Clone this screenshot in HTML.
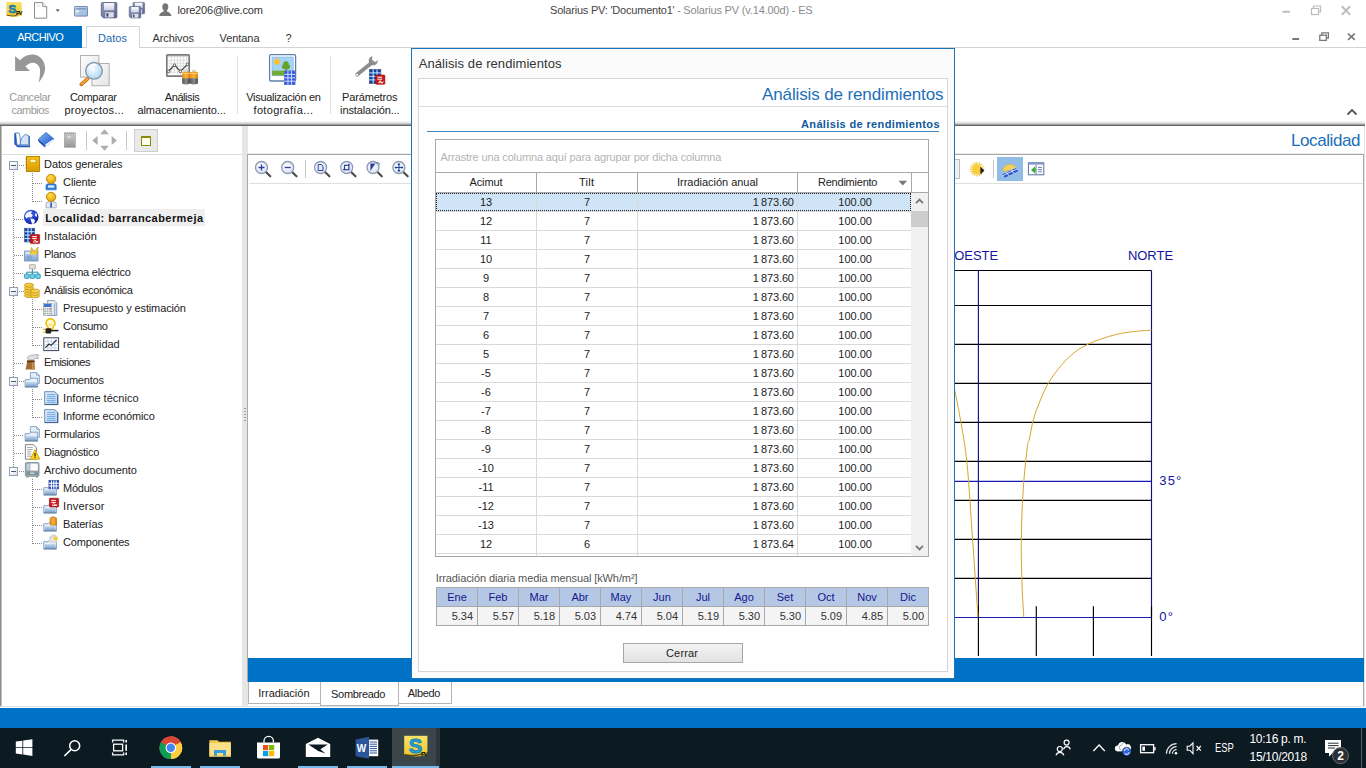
<!DOCTYPE html>
<html lang="es"><head><meta charset="utf-8"><title>Solarius PV</title><style>
html,body{margin:0;padding:0;}
body{width:1366px;height:768px;overflow:hidden;background:#fff;font-family:"Liberation Sans", sans-serif;font-size:11px;color:#222;position:relative;}
.a{position:absolute;box-sizing:content-box;}
.t{position:absolute;white-space:pre;}
svg{overflow:visible;}
</style></head>
<body>
<div class="t" style="top:0px;line-height:20px;font-size:11px;color:#333;left:177.5px;letter-spacing:-0.188px;">lore206@live.com</div>
<div class="t" style="top:0px;line-height:20px;font-size:11px;color:#444;left:550.1px;letter-spacing:-0.215px;">Solarius PV: &#x27;Documento1&#x27;</div>
<div class="t" style="top:0px;line-height:20px;font-size:11px;color:#8a8a8a;left:674.0px;letter-spacing:-0.164px;"> - Solarius PV (v.14.00d) - ES</div>
<div class="a" style="left:139px;top:47px;width:1227px;height:1px;background:#d4d4d4"></div>
<div class="a" style="left:82px;top:47px;width:5px;height:1px;background:#d4d4d4"></div>
<div class="a" style="left:0px;top:26px;width:82px;height:22px;background:#0072c6;"></div>
<div class="t" style="top:27px;line-height:20px;font-size:11px;color:#fff;left:17.3px;letter-spacing:-0.621px;">ARCHIVO</div>
<div class="a" style="left:86px;top:26px;width:54px;height:23px;background:#fff;border:1px solid #d4d4d4;border-bottom:none;width:52px;height:21px;"></div>
<div class="t" style="top:28px;line-height:20px;font-size:11px;color:#1e69ad;left:98.1px;letter-spacing:0.038px;">Datos</div>
<div class="t" style="top:28px;line-height:20px;font-size:11px;color:#333;left:152.5px;letter-spacing:-0.098px;">Archivos</div>
<div class="t" style="top:28px;line-height:20px;font-size:11px;color:#333;left:219.5px;letter-spacing:-0.062px;">Ventana</div>
<div class="t" style="top:28px;line-height:20px;font-size:11px;color:#333;left:285.5px;letter-spacing:0.000px;">?</div>
<div class="t" style="top:87px;line-height:20px;font-size:11px;color:#9a9a9a;left:9.3px;letter-spacing:-0.333px;">Cancelar</div>
<div class="t" style="top:100px;line-height:20px;font-size:11px;color:#9a9a9a;left:11.5px;letter-spacing:-0.528px;">cambios</div>
<div class="t" style="top:87px;line-height:20px;font-size:11px;color:#222;left:69.9px;letter-spacing:-0.258px;">Comparar</div>
<div class="t" style="top:100px;line-height:20px;font-size:11px;color:#222;left:64.5px;letter-spacing:0.231px;">proyectos...</div>
<div class="t" style="top:87px;line-height:20px;font-size:11px;color:#222;left:164.8px;letter-spacing:-0.429px;">Análisis</div>
<div class="t" style="top:100px;line-height:20px;font-size:11px;color:#222;left:137.5px;letter-spacing:-0.099px;">almacenamiento...</div>
<div class="t" style="top:87px;line-height:20px;font-size:11px;color:#222;left:246.3px;letter-spacing:-0.313px;">Visualización en</div>
<div class="t" style="top:100px;line-height:20px;font-size:11px;color:#222;left:253.5px;letter-spacing:0.320px;">fotografía...</div>
<div class="t" style="top:87px;line-height:20px;font-size:11px;color:#222;left:342.0px;letter-spacing:-0.151px;">Parámetros</div>
<div class="t" style="top:100px;line-height:20px;font-size:11px;color:#222;left:340.1px;letter-spacing:-0.120px;">instalación...</div>
<div class="a" style="left:237px;top:56px;width:1px;height:58px;background:#e2e2e2"></div>
<div class="a" style="left:330px;top:56px;width:1px;height:58px;background:#e2e2e2"></div>
<div class="a" style="left:0px;top:121px;width:1365px;height:3px;background:linear-gradient(#fff,#e4e4e4 50%,#c4c4c4);"></div>
<div class="a" style="left:0px;top:124px;width:1365px;height:1px;background:#9c9c9c"></div>
<div class="a" style="left:0px;top:125px;width:1365px;height:1px;background:#666"></div>
<svg class="a" style="left:1280px;top:2px;" width="76" height="16" viewBox="0 0 76 16">
      <rect x="2.4" y="8.8" width="7.4" height="2" fill="#bdbdbd"/>
      <g fill="none" stroke="#bdbdbd" stroke-width="1.2"><rect x="31.5" y="6.5" width="7" height="6"/><path d="M33.5 6.5v-2.5h7v6h-2"/></g>
      <path d="M61.8 4.3l8.4 8.4M70.2 4.3l-8.4 8.4" stroke="#bdbdbd" stroke-width="2" fill="none"/></svg>
<svg class="a" style="left:1290px;top:30px;" width="70" height="14" viewBox="0 0 70 14">
      <rect x="2.3" y="8" width="6.8" height="2" fill="#777"/>
      <g fill="none" stroke="#777" stroke-width="1.3"><rect x="29.8" y="5.2" width="6.5" height="5.2"/><path d="M31.8 5.2v-2.4h6.6v5.2h-2"/></g>
      <path d="M58 3.6l6.8 6.2M64.8 3.6l-6.8 6.2" stroke="#777" stroke-width="1.6" fill="none"/></svg>
<svg class="a" style="left:1346px;top:107px;" width="12" height="10" viewBox="0 0 12 10"><path d="M1.5 7.5l4.5-4.5 4.5 4.5" stroke="#555" stroke-width="1.8" fill="none"/></svg>
<div class="a" style="left:0px;top:126px;width:1px;height:580px;background:#8e8e8e"></div>
<div class="a" style="left:1px;top:126px;width:1px;height:580px;background:#bdbdbd"></div>
<div class="a" style="left:2px;top:154px;width:240px;height:1px;background:#dcdcdc"></div>
<div class="a" style="left:242px;top:126px;width:6px;height:581px;background:#e6e6e6;"></div>
<div class="a" style="left:244px;top:408px;width:2px;height:1px;background:#9a9a9a;"></div>
<div class="a" style="left:244px;top:411px;width:2px;height:1px;background:#9a9a9a;"></div>
<div class="a" style="left:244px;top:414px;width:2px;height:1px;background:#9a9a9a;"></div>
<div class="a" style="left:244px;top:417px;width:2px;height:1px;background:#9a9a9a;"></div>
<div class="a" style="left:244px;top:420px;width:2px;height:1px;background:#9a9a9a;"></div>
<div class="a" style="left:0px;top:706px;width:248px;height:1px;background:#e0e0e0"></div>
<div class="a" style="left:86px;top:131px;width:1px;height:19px;background:#c9c9c9"></div>
<div class="a" style="left:126px;top:131px;width:1px;height:19px;background:#c9c9c9"></div>
<div class="a" style="left:134px;top:129px;width:22px;height:21px;background:#e9e9e9;border:1px solid #cfcfcf;"></div>
<div class="a" style="left:141px;top:136px;width:8px;height:8px;background:#fffef0;border:1px solid #8c8c00;border-top-width:2px;height:7px;"></div>
<div class="a" style="left:13px;top:171px;width:1px;height:296px;background-image:repeating-linear-gradient(0deg,#8a8a8a 0 1px,transparent 1px 2px);"></div>
<div class="a" style="left:32px;top:173px;width:1px;height:29px;background-image:repeating-linear-gradient(0deg,#8a8a8a 0 1px,transparent 1px 2px);"></div>
<div class="a" style="left:32px;top:299px;width:1px;height:47px;background-image:repeating-linear-gradient(0deg,#8a8a8a 0 1px,transparent 1px 2px);"></div>
<div class="a" style="left:32px;top:389px;width:1px;height:29px;background-image:repeating-linear-gradient(0deg,#8a8a8a 0 1px,transparent 1px 2px);"></div>
<div class="a" style="left:32px;top:479px;width:1px;height:65px;background-image:repeating-linear-gradient(0deg,#8a8a8a 0 1px,transparent 1px 2px);"></div>
<div class="a" style="left:19px;top:165px;width:6px;height:1px;background-image:repeating-linear-gradient(90deg,#8a8a8a 0 1px,transparent 1px 2px);"></div>
<div class="a" style="left:9px;top:161px;width:7px;height:7px;background:#fff;border:1px solid #919fb5;background:linear-gradient(135deg,#fff 30%,#d9dde6);"></div>
<div class="a" style="left:11px;top:165px;width:5px;height:1px;background:#4a5878"></div>
<div class="t" style="top:154px;line-height:20px;font-size:11px;color:#222;left:44.1px;letter-spacing:-0.122px;">Datos generales</div>
<div class="a" style="left:33px;top:183px;width:10px;height:1px;background-image:repeating-linear-gradient(90deg,#8a8a8a 0 1px,transparent 1px 2px);"></div>
<div class="t" style="top:172px;line-height:20px;font-size:11px;color:#222;left:63.1px;letter-spacing:-0.142px;">Cliente</div>
<div class="a" style="left:33px;top:201px;width:10px;height:1px;background-image:repeating-linear-gradient(90deg,#8a8a8a 0 1px,transparent 1px 2px);"></div>
<div class="t" style="top:190px;line-height:20px;font-size:11px;color:#222;left:63.1px;letter-spacing:-0.305px;">Técnico</div>
<div class="a" style="left:14px;top:219px;width:10px;height:1px;background-image:repeating-linear-gradient(90deg,#8a8a8a 0 1px,transparent 1px 2px);"></div>
<div class="a" style="left:43px;top:209px;width:162px;height:17px;background:#efefef;"></div>
<div class="t" style="top:208px;line-height:20px;font-size:11px;color:#111;font-weight:700;left:45.3px;letter-spacing:0.439px;">Localidad: barrancabermeja</div>
<div class="a" style="left:14px;top:237px;width:10px;height:1px;background-image:repeating-linear-gradient(90deg,#8a8a8a 0 1px,transparent 1px 2px);"></div>
<div class="t" style="top:226px;line-height:20px;font-size:11px;color:#222;left:44.1px;letter-spacing:0.011px;">Instalación</div>
<div class="a" style="left:14px;top:255px;width:10px;height:1px;background-image:repeating-linear-gradient(90deg,#8a8a8a 0 1px,transparent 1px 2px);"></div>
<div class="t" style="top:244px;line-height:20px;font-size:11px;color:#222;left:44.1px;letter-spacing:-0.368px;">Planos</div>
<div class="a" style="left:14px;top:273px;width:10px;height:1px;background-image:repeating-linear-gradient(90deg,#8a8a8a 0 1px,transparent 1px 2px);"></div>
<div class="t" style="top:262px;line-height:20px;font-size:11px;color:#222;left:44.1px;letter-spacing:-0.231px;">Esquema eléctrico</div>
<div class="a" style="left:19px;top:291px;width:6px;height:1px;background-image:repeating-linear-gradient(90deg,#8a8a8a 0 1px,transparent 1px 2px);"></div>
<div class="a" style="left:9px;top:287px;width:7px;height:7px;background:#fff;border:1px solid #919fb5;background:linear-gradient(135deg,#fff 30%,#d9dde6);"></div>
<div class="a" style="left:11px;top:291px;width:5px;height:1px;background:#4a5878"></div>
<div class="t" style="top:280px;line-height:20px;font-size:11px;color:#222;left:44.1px;letter-spacing:-0.315px;">Análisis económica</div>
<div class="a" style="left:33px;top:309px;width:10px;height:1px;background-image:repeating-linear-gradient(90deg,#8a8a8a 0 1px,transparent 1px 2px);"></div>
<div class="t" style="top:298px;line-height:20px;font-size:11px;color:#222;left:63.1px;letter-spacing:-0.137px;">Presupuesto y estimación</div>
<div class="a" style="left:33px;top:327px;width:10px;height:1px;background-image:repeating-linear-gradient(90deg,#8a8a8a 0 1px,transparent 1px 2px);"></div>
<div class="t" style="top:316px;line-height:20px;font-size:11px;color:#222;left:63.1px;letter-spacing:-0.380px;">Consumo</div>
<div class="a" style="left:33px;top:345px;width:10px;height:1px;background-image:repeating-linear-gradient(90deg,#8a8a8a 0 1px,transparent 1px 2px);"></div>
<div class="t" style="top:334px;line-height:20px;font-size:11px;color:#222;left:63.1px;letter-spacing:-0.025px;">rentabilidad</div>
<div class="a" style="left:14px;top:363px;width:10px;height:1px;background-image:repeating-linear-gradient(90deg,#8a8a8a 0 1px,transparent 1px 2px);"></div>
<div class="t" style="top:352px;line-height:20px;font-size:11px;color:#222;left:44.1px;letter-spacing:-0.556px;">Emisiones</div>
<div class="a" style="left:19px;top:381px;width:6px;height:1px;background-image:repeating-linear-gradient(90deg,#8a8a8a 0 1px,transparent 1px 2px);"></div>
<div class="a" style="left:9px;top:377px;width:7px;height:7px;background:#fff;border:1px solid #919fb5;background:linear-gradient(135deg,#fff 30%,#d9dde6);"></div>
<div class="a" style="left:11px;top:381px;width:5px;height:1px;background:#4a5878"></div>
<div class="t" style="top:370px;line-height:20px;font-size:11px;color:#222;left:44.1px;letter-spacing:-0.218px;">Documentos</div>
<div class="a" style="left:33px;top:399px;width:10px;height:1px;background-image:repeating-linear-gradient(90deg,#8a8a8a 0 1px,transparent 1px 2px);"></div>
<div class="t" style="top:388px;line-height:20px;font-size:11px;color:#222;left:63.1px;letter-spacing:0.021px;">Informe técnico</div>
<div class="a" style="left:33px;top:417px;width:10px;height:1px;background-image:repeating-linear-gradient(90deg,#8a8a8a 0 1px,transparent 1px 2px);"></div>
<div class="t" style="top:406px;line-height:20px;font-size:11px;color:#222;left:63.1px;letter-spacing:-0.115px;">Informe económico</div>
<div class="a" style="left:14px;top:435px;width:10px;height:1px;background-image:repeating-linear-gradient(90deg,#8a8a8a 0 1px,transparent 1px 2px);"></div>
<div class="t" style="top:424px;line-height:20px;font-size:11px;color:#222;left:44.1px;letter-spacing:-0.218px;">Formularios</div>
<div class="a" style="left:14px;top:453px;width:10px;height:1px;background-image:repeating-linear-gradient(90deg,#8a8a8a 0 1px,transparent 1px 2px);"></div>
<div class="t" style="top:442px;line-height:20px;font-size:11px;color:#222;left:44.1px;letter-spacing:-0.218px;">Diagnóstico</div>
<div class="a" style="left:19px;top:471px;width:6px;height:1px;background-image:repeating-linear-gradient(90deg,#8a8a8a 0 1px,transparent 1px 2px);"></div>
<div class="a" style="left:9px;top:467px;width:7px;height:7px;background:#fff;border:1px solid #919fb5;background:linear-gradient(135deg,#fff 30%,#d9dde6);"></div>
<div class="a" style="left:11px;top:471px;width:5px;height:1px;background:#4a5878"></div>
<div class="t" style="top:460px;line-height:20px;font-size:11px;color:#222;left:44.1px;letter-spacing:-0.092px;">Archivo documento</div>
<div class="a" style="left:33px;top:489px;width:10px;height:1px;background-image:repeating-linear-gradient(90deg,#8a8a8a 0 1px,transparent 1px 2px);"></div>
<div class="t" style="top:478px;line-height:20px;font-size:11px;color:#222;left:63.1px;letter-spacing:-0.280px;">Módulos</div>
<div class="a" style="left:33px;top:507px;width:10px;height:1px;background-image:repeating-linear-gradient(90deg,#8a8a8a 0 1px,transparent 1px 2px);"></div>
<div class="t" style="top:496px;line-height:20px;font-size:11px;color:#222;left:63.1px;letter-spacing:0.236px;">Inversor</div>
<div class="a" style="left:33px;top:525px;width:10px;height:1px;background-image:repeating-linear-gradient(90deg,#8a8a8a 0 1px,transparent 1px 2px);"></div>
<div class="t" style="top:514px;line-height:20px;font-size:11px;color:#222;left:63.1px;letter-spacing:-0.153px;">Baterías</div>
<div class="a" style="left:33px;top:543px;width:10px;height:1px;background-image:repeating-linear-gradient(90deg,#8a8a8a 0 1px,transparent 1px 2px);"></div>
<div class="t" style="top:532px;line-height:20px;font-size:11px;color:#222;left:63.1px;letter-spacing:-0.200px;">Componentes</div>
<div class="t" style="top:131px;line-height:20px;font-size:17px;color:#1c6fb8;left:1291.0px;letter-spacing:-0.410px;">Localidad</div>
<div class="a" style="left:248px;top:153px;width:1116px;height:1px;background:#ececec"></div>
<div class="a" style="left:247px;top:154px;width:1117px;height:1px;background:#a6a6a6"></div>
<div class="a" style="left:247px;top:154px;width:1px;height:528px;background:#a9a9a9"></div>
<div class="a" style="left:1363px;top:154px;width:1px;height:552px;background:#a9a9a9"></div>
<div class="a" style="left:1364px;top:126px;width:1px;height:581px;background:#e3e3e3"></div>
<div class="a" style="left:249px;top:183px;width:1114px;height:1px;background:#dedede"></div>
<div class="a" style="left:305px;top:160px;width:1px;height:18px;background:#c9c9c9"></div>
<div class="a" style="left:940px;top:159px;width:18px;height:18px;background:#eeeeee;border:1px solid #bdbdbd;"></div>
<div class="a" style="left:993px;top:160px;width:1px;height:18px;background:#c9c9c9"></div>
<div class="a" style="left:997px;top:157px;width:26px;height:24px;background:#91bce6;"></div>
<div class="a" style="left:248px;top:658px;width:1116px;height:24px;background:#0072c6;"></div>
<div class="a" style="left:248px;top:682px;width:71px;height:20px;background:#fff;border:1px solid #b5b5b5;border-top:none;height:21px;"></div>
<div class="t" style="top:683px;line-height:20px;font-size:11px;color:#222;left:258.3px;letter-spacing:-0.016px;">Irradiación</div>
<div class="a" style="left:398px;top:682px;width:52px;height:20px;background:#fff;border:1px solid #b5b5b5;border-top:none;height:21px;"></div>
<div class="t" style="top:683px;line-height:20px;font-size:11px;color:#222;left:407.8px;letter-spacing:-0.313px;">Albedo</div>
<div class="a" style="left:320px;top:682px;width:77px;height:22px;background:#fff;border:1px solid #b5b5b5;border-top:none;height:23px;"></div>
<div class="t" style="top:684px;line-height:20px;font-size:11px;color:#222;left:331.1px;letter-spacing:-0.309px;">Sombreado</div>
<div class="a" style="left:248px;top:706px;width:1116px;height:1px;background:#e0e0e0"></div>
<div class="a" style="left:0px;top:708px;width:1366px;height:20px;background:#0072c6;"></div>
<svg class="a" style="left:0px;top:0px;" width="1366" height="768" viewBox="0 0 1366 768"><path d="M955 270.5H1151.5" stroke="#000" stroke-width="1.15"/><path d="M955 305.5H1151.5" stroke="#000" stroke-width="1.15"/><path d="M955 344.3H1151.5" stroke="#000" stroke-width="1.15"/><path d="M955 383.4H1151.5" stroke="#000" stroke-width="1.15"/><path d="M955 422.3H1151.5" stroke="#000" stroke-width="1.15"/><path d="M955 461.4H1151.5" stroke="#000" stroke-width="1.15"/><path d="M955 500.4H1151.5" stroke="#000" stroke-width="1.15"/><path d="M955 539.3H1151.5" stroke="#000" stroke-width="1.15"/><path d="M955 578.4H1151.5" stroke="#000" stroke-width="1.15"/><path d="M955 481.4H1151.5" stroke="#1a1ab4" stroke-width="1.1"/><path d="M955 617.5H1151.5" stroke="#1a1ab4" stroke-width="1.1"/><path d="M978.4 270.5V617.5" stroke="#10108c" stroke-width="1.15"/><path d="M1151.5 270.5V617.5" stroke="#10108c" stroke-width="1.15"/><path d="M978.4 606.3V656" stroke="#000" stroke-width="1.15"/><path d="M1036.3 606.3V656" stroke="#000" stroke-width="1.15"/><path d="M1093.4 606.3V656" stroke="#000" stroke-width="1.15"/><path d="M1151.5 606.3V656" stroke="#000" stroke-width="1.15"/><path d="M1151.6 330.1C1148.4 330.4 1138.1 331.0 1132.3 331.7C1126.5 332.4 1121.9 333.1 1116.7 334.3C1111.5 335.5 1105.8 337.4 1101 339C1096.2 340.6 1092.3 342.0 1088 344.2C1083.7 346.4 1079.3 348.6 1075 352C1070.7 355.4 1066.3 359.5 1062 364.5C1057.7 369.5 1052.7 375.8 1049 382C1045.3 388.2 1042.4 395.2 1039.8 401.5C1037.2 407.8 1035.0 413.4 1033.3 419.7C1031.6 426.0 1030.4 434.6 1029.4 439.2C1028.4 443.8 1028.3 438.8 1027.3 447C1026.3 455.2 1024.3 473.1 1023.3 488.3C1022.3 503.5 1021.5 522.3 1021.3 538.3C1021.1 554.2 1021.6 570.8 1022 584C1022.4 597.2 1023.5 611.9 1023.8 617.5" stroke="#d6a52a" stroke-width="1" fill="none"/><path d="M940 330C941.3 335.0 945.5 349.5 948 360C950.5 370.5 953.2 382.7 955.3 393C957.4 403.3 958.8 410.0 960.8 421.7C962.8 433.4 965.0 443.9 967 463.3C969.0 482.7 971.1 518.8 972.5 538.3C973.9 557.8 974.5 566.9 975.4 580C976.3 593.1 977.6 610.6 978 616.7" stroke="#d6a52a" stroke-width="1" fill="none"/></svg>
<div class="t" style="top:246px;line-height:20px;font-size:13px;color:#1414a0;left:954.3px;letter-spacing:-0.070px;">OESTE</div>
<div class="t" style="top:246px;line-height:20px;font-size:13px;color:#1414a0;left:1127.9px;letter-spacing:-0.016px;">NORTE</div>
<div class="t" style="top:471px;line-height:20px;font-size:13px;color:#1414a0;left:1159.3px;letter-spacing:1.164px;">35°</div>
<div class="t" style="top:607px;line-height:20px;font-size:13px;color:#1414a0;left:1159.3px;letter-spacing:1.200px;">0°</div>
<svg class="a" width="0" height="0" style="left:0;top:0"><defs>
<linearGradient id="gYel" x1="0" y1="0" x2="0" y2="1"><stop offset="0" stop-color="#f8e26a"/><stop offset="1" stop-color="#efc92f"/></linearGradient>
<linearGradient id="gDisk" x1="0" y1="0" x2="1" y2="1"><stop offset="0" stop-color="#8e98b9"/><stop offset="1" stop-color="#5c668c"/></linearGradient>
<linearGradient id="gLbl" x1="0" y1="0" x2="0" y2="1"><stop offset="0" stop-color="#ffffff"/><stop offset="1" stop-color="#c9d0e2"/></linearGradient>
<linearGradient id="gWin" x1="0" y1="0" x2="1" y2="1"><stop offset="0" stop-color="#e2ebf6"/><stop offset="1" stop-color="#8fabd0"/></linearGradient>
<radialGradient id="gLens" cx="0.4" cy="0.35" r="0.7"><stop offset="0" stop-color="#ffffff"/><stop offset="1" stop-color="#a9d3f2"/></radialGradient>
<linearGradient id="gPage" x1="0" y1="0" x2="1" y2="1"><stop offset="0" stop-color="#fdfdfd"/><stop offset="1" stop-color="#e4e4e4"/></linearGradient>
<linearGradient id="gOr" x1="0" y1="0" x2="1" y2="0"><stop offset="0" stop-color="#e98a12"/><stop offset="0.5" stop-color="#f9b23a"/><stop offset="1" stop-color="#d97a08"/></linearGradient>
<linearGradient id="gGy" x1="0" y1="0" x2="1" y2="0"><stop offset="0" stop-color="#505050"/><stop offset="0.5" stop-color="#8c8c8c"/><stop offset="1" stop-color="#444"/></linearGradient>
<linearGradient id="gBook" x1="0" y1="0" x2="1" y2="1"><stop offset="0" stop-color="#7db4f4"/><stop offset="1" stop-color="#1b55c4"/></linearGradient>
<linearGradient id="gNb" x1="0" y1="0" x2="0" y2="1"><stop offset="0" stop-color="#cbcbcb"/><stop offset="1" stop-color="#989898"/></linearGradient>
<linearGradient id="gGold" x1="0" y1="0" x2="0" y2="1"><stop offset="0" stop-color="#f7c21b"/><stop offset="1" stop-color="#d89c00"/></linearGradient>
<radialGradient id="gHead" cx="0.4" cy="0.35" r="0.75"><stop offset="0" stop-color="#ffe04a"/><stop offset="1" stop-color="#e09a00"/></radialGradient>
<radialGradient id="gGlobe" cx="0.35" cy="0.3" r="0.8"><stop offset="0" stop-color="#5a86f0"/><stop offset="0.6" stop-color="#1c36c4"/><stop offset="1" stop-color="#0a1a80"/></radialGradient>
<linearGradient id="gFold" x1="0" y1="0" x2="0" y2="1"><stop offset="0" stop-color="#c8dcf0"/><stop offset="1" stop-color="#7ea4cc"/></linearGradient>
<linearGradient id="gDoc" x1="0" y1="0" x2="1" y2="1"><stop offset="0" stop-color="#eaf3fd"/><stop offset="1" stop-color="#b5d2f0"/></linearGradient>
<radialGradient id="gZ" cx="0.4" cy="0.35" r="0.75"><stop offset="0" stop-color="#ffffff"/><stop offset="1" stop-color="#d3e0f6"/></radialGradient>
</defs></svg>
<svg class="a" style="left:6px;top:2px;" width="16" height="16" viewBox="0 0 16 16"><rect x="0.3" y="0" width="15.4" height="13.6" fill="url(#gYel)"/>
      <path d="M0.3 13.6q7.7 2.6 15.4 0z" fill="#e9c535"/>
      <path d="M0.8 13.3q7 1.6 11.5-0.6" stroke="#2a2a10" stroke-width="0.9" fill="none" opacity=".75"/></svg>
<div class="t" style="top:-1px;line-height:20px;font-size:11.5px;color:#2398cc;font-weight:700;left:8.6px;-webkit-text-stroke:0.7px #176f9c;">S</div>
<div class="t" style="top:3px;line-height:20px;font-size:5.5px;color:#000;font-weight:700;left:15.9px;letter-spacing:-0.800px;">PV</div>
<svg class="a" style="left:34px;top:2px;" width="14" height="16" viewBox="0 0 14 16"><path d="M0.5 0.6h8.2l4 4v11.6h-12.2z" fill="#fff" stroke="#8c8c8c" stroke-width="1"/><path d="M8.7 0.6v4h4" fill="#f2f2f2" stroke="#8c8c8c" stroke-width="0.9"/><rect x="2.2" y="2.5" width="4" height="2.5" fill="#eee"/></svg>
<svg class="a" style="left:55px;top:9px;" width="6" height="4" viewBox="0 0 6 4"><path d="M0.6 0.3h4.2l-2.1 2.6z" fill="#666"/></svg>
<svg class="a" style="left:74px;top:6px;" width="14" height="11" viewBox="0 0 14 11"><rect x="0.5" y="0.5" width="13" height="9.6" rx="0.6" fill="url(#gWin)" stroke="#6f8db8" stroke-width="1"/>
      <rect x="1.8" y="1.8" width="10.4" height="1.8" fill="#7c9ac6"/><rect x="5.5" y="4.6" width="6.7" height="4.2" fill="#a9c0de"/><rect x="1.8" y="4.6" width="3" height="1.3" fill="#f4f8fc"/></svg>
<svg class="a" style="left:101px;top:2px;" width="17" height="17" viewBox="0 0 17 17"><g transform="translate(0.3,0.2) scale(1.0)"><path d="M1 0.3h13.6a1 1 0 0 1 1 1v13.4a1 1 0 0 1-1 1h-12.4l-2.2-2.0v-12.4a1 1 0 0 1 1-1z" fill="url(#gDisk)" stroke="#4a5580" stroke-width="0.7"/><rect x="2.7" y="0.9" width="10.2" height="7.2" fill="url(#gLbl)"/><rect x="4" y="10" width="8.4" height="5.2" fill="#dcdfe8"/><rect x="5.2" y="11" width="1.9" height="3.4" fill="#3c4466"/></g></svg>
<svg class="a" style="left:129px;top:2px;" width="17" height="17" viewBox="0 0 17 17"><g transform="translate(4.0,0.2) scale(0.74)"><path d="M1 0.3h13.6a1 1 0 0 1 1 1v13.4a1 1 0 0 1-1 1h-12.4l-2.2-2.0v-12.4a1 1 0 0 1 1-1z" fill="url(#gDisk)" stroke="#4a5580" stroke-width="0.7"/><rect x="2.7" y="0.9" width="10.2" height="7.2" fill="url(#gLbl)"/><rect x="4" y="10" width="8.4" height="5.2" fill="#dcdfe8"/><rect x="5.2" y="11" width="1.9" height="3.4" fill="#3c4466"/></g><g transform="translate(0.2,4.4) scale(0.74)"><path d="M1 0.3h13.6a1 1 0 0 1 1 1v13.4a1 1 0 0 1-1 1h-12.4l-2.2-2.0v-12.4a1 1 0 0 1 1-1z" fill="url(#gDisk)" stroke="#4a5580" stroke-width="0.7"/><rect x="2.7" y="0.9" width="10.2" height="7.2" fill="url(#gLbl)"/><rect x="4" y="10" width="8.4" height="5.2" fill="#dcdfe8"/><rect x="5.2" y="11" width="1.9" height="3.4" fill="#3c4466"/></g></svg>
<svg class="a" style="left:159px;top:3px;" width="13" height="14" viewBox="0 0 13 14"><path d="M6.3 0.3c1.9 0 3 1.4 3 3.4 0 1.6-0.6 2.9-1.4 3.6v1.1c2 0.7 4.2 1.6 4.6 4.6h-12.4c0.4-3 2.6-3.9 4.6-4.6v-1.1c-0.8-0.7-1.4-2-1.4-3.6 0-2 1.1-3.4 3-3.4z" fill="#767676"/></svg>
<svg class="a" style="left:0px;top:48px;" width="60" height="44" viewBox="0 48 60 44"><path d="M15.1 56.2v14.8h14.9l-4.6-4.6c2.6-2.5 6.2-4.3 9.2-3.4 3.6 1.1 5.6 4.3 5.5 8.6-0.1 4.5-0.8 8.2-1.3 11.1 3.6-4.6 6.4-9.6 6.3-14.6-0.1-6.6-4.6-12.6-11.6-13.5-5-0.6-9.6 1.6-13.4 5.7z" fill="#979797"/></svg>
<svg class="a" style="left:60px;top:48px;" width="60" height="44" viewBox="60 48 60 44"><rect x="80.5" y="55.5" width="18.4" height="21.6" fill="url(#gPage)" stroke="#b0b0b0"/>
      <rect x="91.9" y="63.5" width="17.3" height="22.2" fill="url(#gPage)" stroke="#b0b0b0"/>
      <path d="M87.6 78.9l-6.4 5.4" stroke="#c96f10" stroke-width="3.6" stroke-linecap="round"/>
      <path d="M87.6 78.7l-6.2 5.2" stroke="#f5a33a" stroke-width="2" stroke-linecap="round"/>
      <circle cx="94" cy="70.8" r="8.3" fill="url(#gLens)" stroke="#8297ac" stroke-width="1.4"/>
      <path d="M88.5 68.5a6 6 0 0 1 8-3.6" stroke="#fff" stroke-width="1.6" fill="none" opacity=".9"/></svg>
<svg class="a" style="left:150px;top:48px;" width="60" height="44" viewBox="150 48 60 44"><rect x="166.8" y="54.8" width="22.4" height="21.4" rx="0.8" fill="#fff" stroke="#7a7a7a" stroke-width="1.7"/>
      <rect x="168" y="56" width="20" height="1.2" fill="#d8d8d8"/><path d="M171.3 57v17.6" stroke="#d2d2d2" stroke-width="0.7"/><path d="M174.4 57v17.6" stroke="#d2d2d2" stroke-width="0.7"/><path d="M177.5 57v17.6" stroke="#d2d2d2" stroke-width="0.7"/><path d="M180.6 57v17.6" stroke="#d2d2d2" stroke-width="0.7"/><path d="M183.7 57v17.6" stroke="#d2d2d2" stroke-width="0.7"/><path d="M186.8 57v17.6" stroke="#d2d2d2" stroke-width="0.7"/><path d="M168 60.2h20" stroke="#d2d2d2" stroke-width="0.7"/><path d="M168 63.2h20" stroke="#d2d2d2" stroke-width="0.7"/><path d="M168 66.2h20" stroke="#d2d2d2" stroke-width="0.7"/><path d="M168 69.2h20" stroke="#d2d2d2" stroke-width="0.7"/><path d="M168 72.2h20" stroke="#d2d2d2" stroke-width="0.7"/>
      <path d="M168.3 71.5l6.2-6.3 5.9 6.2 7.1-7.1" stroke="#3c3c3c" stroke-width="1.2" fill="none"/>
      <g fill="#fff" stroke="#3c3c3c" stroke-width="0.8"><circle cx="168.5" cy="71.5" r="1.3"/><circle cx="174.5" cy="65.2" r="1.3"/><circle cx="180.4" cy="71.4" r="1.3"/><circle cx="187.5" cy="64.3" r="1.3"/></g>
      <g><rect x="184.6" y="69.8" width="3" height="2.2" rx="0.8" fill="#e2e2e2" stroke="#aaa" stroke-width="0.3"/><rect x="192.4" y="69.8" width="3" height="2.2" rx="0.8" fill="#e2e2e2" stroke="#aaa" stroke-width="0.3"/>
      <path d="M182.2 72.4q3.9-2 7.8 0v6h-7.8z" fill="url(#gOr)"/><path d="M190.1 72.4q3.9-2 7.8 0v6h-7.8z" fill="url(#gOr)"/>
      <path d="M182.2 78.2h7.8v5.4q-3.9 1.8-7.8 0z" fill="url(#gGy)"/><path d="M190.1 78.2h7.8v5.4q-3.9 1.8-7.8 0z" fill="url(#gGy)"/>
      <path d="M182.4 73.6h7.4M190.3 73.6h7.4" stroke="#ffd27a" stroke-width="0.9"/></g></svg>
<svg class="a" style="left:255px;top:48px;" width="60" height="44" viewBox="255 48 60 44"><rect x="269.6" y="54.6" width="26" height="26.4" rx="1.2" fill="#fff" stroke="#5d80ae" stroke-width="1.3"/>
      <rect x="272" y="57" width="21.2" height="13.8" fill="#a3d3f7"/><rect x="272" y="70.6" width="21.2" height="5.2" fill="#73ad2f"/>
      <rect x="272" y="57" width="21.2" height="18.8" fill="none" stroke="#7fb0e0" stroke-width="0.6"/>
      <circle cx="277" cy="61.8" r="3" fill="#f8c32c"/>
      <path d="M285.6 69v3h1v-3z" fill="#7a5a20"/><path d="M286 61.2c2.4 0 3.2 2 2.6 3.2 1.8 0.6 2.2 3.2 0.2 4.4-1 0.8-4.6 0.8-5.6 0-2-1.2-1.6-3.8 0.2-4.4-0.6-1.2 0.2-3.2 2.6-3.2z" fill="#63a22b"/>
      <rect x="284.4" y="71" width="10.6" height="13.6" fill="#3157e4" stroke="#5a6fc0" stroke-width="0.8"/><path d="M287.93 71V84.6" stroke="#c9d6fb" stroke-width="1.1"/><path d="M291.47 71V84.6" stroke="#c9d6fb" stroke-width="1.1"/><path d="M284.4 74.40H295.0" stroke="#c9d6fb" stroke-width="1.1"/><path d="M284.4 77.80H295.0" stroke="#c9d6fb" stroke-width="1.1"/><path d="M284.4 81.20H295.0" stroke="#c9d6fb" stroke-width="1.1"/></svg>
<svg class="a" style="left:340px;top:48px;" width="60" height="44" viewBox="340 48 60 44"><path d="M357.2 74.6l14.6-11.9" stroke="#8d8d8d" stroke-width="3.9" stroke-linecap="round"/>
      <circle cx="357" cy="74.7" r="1" fill="#fff"/>
      <path d="M377.6 59.4a4.6 4.6 0 1 1-5-3.2l-0.6 3.4 2.6 1.8z" fill="#8d8d8d"/>
      <path d="M373.2 57.2l-0.5 2.7 2.5 1.9 2.6-1.6" fill="#fff" stroke="#fff" stroke-width="0.4"/>
      <rect x="369.4" y="69.4" width="11.4" height="14" fill="#173d9e" stroke="#4a5a8a" stroke-width="0.8"/><path d="M373.20 69.4V83.4" stroke="#b4e6ff" stroke-width="1.1"/><path d="M377.00 69.4V83.4" stroke="#b4e6ff" stroke-width="1.1"/><path d="M369.4 72.90H380.79999999999995" stroke="#b4e6ff" stroke-width="1.1"/><path d="M369.4 76.40H380.79999999999995" stroke="#b4e6ff" stroke-width="1.1"/><path d="M369.4 79.90H380.79999999999995" stroke="#b4e6ff" stroke-width="1.1"/>
      <rect x="375.6" y="75" width="9.3" height="9.3" rx="0.8" fill="#c9181c" stroke="#8e0c10" stroke-width="0.6"/><path d="M377.40000000000003 77.2h4.800000000000001M377.40000000000003 79.2h4.800000000000001" stroke="#fff" stroke-width="1"/><path d="M378.855 81.696q1.116 -1.8600000000000003 2.325 0t2.325 0" stroke="#fff" stroke-width="1" fill="none"/><path d="M378.39000000000004 82.7h4.65" stroke="#fff" stroke-width="0.9"/></svg>
<svg class="a" style="left:8px;top:126px;" width="120" height="30" viewBox="8 126 120 30"><path d="M14.2 133.6l2.2-1 1.4 12.6 11.4 0.2v-9.6l0.8 0.4v11h-12.6l-3-3z" fill="#2458b4"/>
      <path d="M15.6 132.8l3.6 0.4c1 3 1.4 7 1 11.6l-3.2 0.4z" fill="#fbfdff" stroke="#2e63bb" stroke-width="0.7"/>
      <path d="M20.2 144.8c0.2-5 1.8-8.6 5.2-10.4l3.2 1.2v9.2z" fill="#d5e3f6" stroke="#2e63bb" stroke-width="0.7"/>
      <path d="M38.4 139.2l7.6-6.8 7.6 6.2-1 2.4-8 5.8-5.6-5.2z" fill="url(#gBook)" stroke="#1a4db0" stroke-width="0.6"/>
      <path d="M45.4 144.6l7.6-5.4 0.4 1.6-7.6 5.4z" fill="#fff"/>
      <path d="M38.6 139.6l5.8 5.4 0.3 1.9-6-5.5z" fill="#1747b0"/>
      <rect x="64.6" y="133" width="10.8" height="14.2" fill="url(#gNb)" stroke="#8a8a8a" stroke-width="0.6"/>
      <path d="M65.4 132.4v1.6M67.4 132.4v1.6M69.4 132.4v1.6M71.4 132.4v1.6M73.4 132.4v1.6" stroke="#999" stroke-width="0.9"/>
      <rect x="67" y="135.6" width="4.6" height="3" fill="#d8d8d8" stroke="#aaa" stroke-width="0.4"/>
      <path d="M75.6 133.4v13.4" stroke="#c4c4c4" stroke-width="0.8"/>
      <g fill="#adadad"><path d="M104.5 129.3l4.4 5h-8.8z"/><path d="M104.5 150.8l4.4-5h-8.8z"/><path d="M92.2 140.5l5.4-4.4v8.8z"/><path d="M117 140.5l-5.4-4.4v8.8z"/></g></svg>
<svg class="a" style="left:0px;top:0px;" width="70" height="560" viewBox="0 0 70 560"><rect x="26.4" y="156.5" width="13.2" height="15" fill="url(#gGold)" stroke="#b27f00" stroke-width="0.9"/><rect x="30.2" y="159.4" width="5.6" height="3" fill="#fff6cf" stroke="#c79400" stroke-width="0.5"/><path d="M25.4 159h1.6M25.4 162h1.6M25.4 165h1.6M25.4 168h1.6" stroke="#9a6c00" stroke-width="0.8"/><path d="M46 189.8v-4q0-2 2.2-2h5.8q2.2 0 2.2 2v4z" fill="#2f80dc" stroke="#1c5cb0" stroke-width="0.6"/><path d="M48 185.4h6.2v2.2h-6.2z" fill="#e6f3ff"/><ellipse cx="51.1" cy="178.9" rx="4.7" ry="4.6" fill="url(#gHead)" stroke="#b87400" stroke-width="0.8"/><path d="M46 207.8v-4q0-2 2.2-2h5.8q2.2 0 2.2 2v4z" fill="#e6e9f1" stroke="#8d96ad" stroke-width="0.7"/><path d="M50.3 202.4h1.7v5h-1.7z" fill="#2a62c8"/><ellipse cx="51.1" cy="196.9" rx="4.7" ry="4.6" fill="url(#gHead)" stroke="#b87400" stroke-width="0.8"/><circle cx="31.2" cy="217" r="7.3" fill="url(#gGlobe)"/><path d="M26.6 213q2.8-2.2 5.4-1.6l-1 2.4 1.8 1.4-1.6 2.4-2.8-0.6-1.8 1.6-1.8-2.4z" fill="#f2f6ff"/><path d="M30.4 218.6l3.2 0.4 1.6 1.8-1.4 2.8-1.8 0.4-0.8-2.6z" fill="#f2f6ff"/><path d="M35.4 212.6l1.8 2-0.6 2.6-1.8-1.4z" fill="#dfe8ff"/><rect x="24.6" y="228.3" width="10" height="13.6" fill="#173d9e" stroke="#4a5a8a" stroke-width="0.8"/><path d="M27.93 228.3V241.9" stroke="#b4e6ff" stroke-width="1.1"/><path d="M31.27 228.3V241.9" stroke="#b4e6ff" stroke-width="1.1"/><path d="M24.6 231.70H34.6" stroke="#b4e6ff" stroke-width="1.1"/><path d="M24.6 235.10H34.6" stroke="#b4e6ff" stroke-width="1.1"/><path d="M24.6 238.50H34.6" stroke="#b4e6ff" stroke-width="1.1"/><rect x="30.4" y="234.4" width="9.2" height="9.2" rx="0.8" fill="#c9181c" stroke="#8e0c10" stroke-width="0.6"/><path d="M32.199999999999996 236.6h4.699999999999999M32.199999999999996 238.6h4.699999999999999" stroke="#fff" stroke-width="1"/><path d="M33.62 241.024q1.1039999999999999 -1.8399999999999999 2.3 0t2.3 0" stroke="#fff" stroke-width="1" fill="none"/><path d="M33.16 242.0h4.6" stroke="#fff" stroke-width="0.9"/><rect x="24.6" y="251" width="13.4" height="10" fill="url(#gFold)" stroke="#6f8fb4" stroke-width="0.8"/><path d="M25.6 253h11.4" stroke="#f2f7fc" stroke-width="1.1"/><rect x="26.2" y="255.4" width="6" height="4" fill="#7fa4d0" opacity=".8"/><path d="M30.6 254.4l0.8-7 2.6 4.4 4.2-4.8-1.6 7.4" fill="#f7cf3a" stroke="#c99a10" stroke-width="0.7"/><path d="M32.4 269v3.2M26.8 274v-1.8h11.2v1.8M32.4 272.2v1.8" stroke="#2f8faa" stroke-width="1" fill="none"/><rect x="29.4" y="264.6" width="6" height="4.4" rx="0.8" fill="#e6e1d4" stroke="#9a978c" stroke-width="0.7"/><rect x="24.5" y="274" width="4.6" height="4.4" rx="1" fill="#6fd0ea" stroke="#2590b2" stroke-width="0.8"/><rect x="30.1" y="274" width="4.6" height="4.4" rx="1" fill="#6fd0ea" stroke="#2590b2" stroke-width="0.8"/><rect x="35.7" y="274" width="4.6" height="4.4" rx="1" fill="#6fd0ea" stroke="#2590b2" stroke-width="0.8"/><ellipse cx="29" cy="295.6" rx="4.6" ry="2" fill="#f3c53a" stroke="#bf8f10" stroke-width="0.7"/><ellipse cx="29" cy="293.0" rx="4.6" ry="2" fill="#f3c53a" stroke="#bf8f10" stroke-width="0.7"/><ellipse cx="29" cy="290.40000000000003" rx="4.6" ry="2" fill="#f3c53a" stroke="#bf8f10" stroke-width="0.7"/><ellipse cx="29" cy="287.8" rx="4.6" ry="2" fill="#f3c53a" stroke="#bf8f10" stroke-width="0.7"/><ellipse cx="29" cy="285.20000000000005" rx="4.6" ry="2" fill="#f3c53a" stroke="#bf8f10" stroke-width="0.7"/><ellipse cx="35.2" cy="295.8" rx="4.4" ry="2" fill="#f6cf4e" stroke="#bf8f10" stroke-width="0.7"/><ellipse cx="35.2" cy="293.40000000000003" rx="4.4" ry="2" fill="#f6cf4e" stroke="#bf8f10" stroke-width="0.7"/><ellipse cx="35.2" cy="291.0" rx="4.4" ry="2" fill="#f6cf4e" stroke="#bf8f10" stroke-width="0.7"/><path d="M47.6 300.6h6.6l2.6 2.4v12.4h-9.2z" fill="#eef3fa" stroke="#6b84a8" stroke-width="0.8"/><path d="M54.6 303v12.4" stroke="#9fb6d6" stroke-width="1.6"/><rect x="43.4" y="303.4" width="8.4" height="11.8" fill="#f4f4f4" stroke="#8a8a8a" stroke-width="0.6"/><rect x="44" y="304" width="7.2" height="3" fill="#3d72d4"/><rect x="44.2" y="308.2" width="1.7" height="1.4" fill="#9aa"/><rect x="44.2" y="310.5" width="1.7" height="1.4" fill="#9aa"/><rect x="44.2" y="312.8" width="1.7" height="1.4" fill="#9aa"/><rect x="46.7" y="308.2" width="1.7" height="1.4" fill="#9aa"/><rect x="46.7" y="310.5" width="1.7" height="1.4" fill="#9aa"/><rect x="46.7" y="312.8" width="1.7" height="1.4" fill="#9aa"/><rect x="49.2" y="308.2" width="1.7" height="1.4" fill="#d9534f"/><rect x="49.2" y="310.5" width="1.7" height="1.4" fill="#9aa"/><rect x="49.2" y="312.8" width="1.7" height="1.4" fill="#9aa"/><path d="M50.5 318.7a4.5 4.5 0 0 1 2.7 8.1l-0.7 2.2h-4l-0.7-2.2a4.5 4.5 0 0 1 2.7-8.1z" fill="#fff7cf" stroke="#f0c000" stroke-width="1.4"/><path d="M48.6 324.4q1.9 1.6 3.8 0" stroke="#f0c000" stroke-width="0.8" fill="none"/><path d="M43.2 329.4h2.6M43.2 332.2h2.6" stroke="#e2b400" stroke-width="1.3"/><rect x="45.6" y="328.2" width="5.6" height="5.4" rx="1" fill="#222"/><path d="M51 330.6h7.4" stroke="#222" stroke-width="1.6"/><rect x="43.8" y="337.8" width="14.8" height="12.8" fill="#fff" stroke="#3c4458" stroke-width="1"/><path d="M47.9 338.4v11.6" stroke="#b8c6e6" stroke-width="0.7"/><path d="M51.4 338.4v11.6" stroke="#b8c6e6" stroke-width="0.7"/><path d="M54.9 338.4v11.6" stroke="#b8c6e6" stroke-width="0.7"/><path d="M44.4 341.4h13.6" stroke="#b8c6e6" stroke-width="0.7"/><path d="M44.4 344.6h13.6" stroke="#b8c6e6" stroke-width="0.7"/><path d="M44.4 347.8h13.6" stroke="#b8c6e6" stroke-width="0.7"/><path d="M45.4 347.6l3.6-3.6 2.2 1.4 5.4-5.6" stroke="#222" stroke-width="1.1" fill="none"/><path d="M27 357.6q3-3.4 7-2.6 3.4-1.6 5 0.4l-2.4 1 2 2-3.6 0.2q-1.4 2-4.6 1.4-2.4 0.4-3.4-2.4z" fill="#dfe1e6" stroke="#8a8f99" stroke-width="0.6"/><path d="M27.4 360.6h6.8l0.8 8.8h-9.4z" fill="#a36a32"/><path d="M27 360.4h7.6v1.8h-7.6z" fill="#5a3410"/><path d="M31.6 362.2l1.8 0 0.8 7.2h-2z" fill="#c98f55"/><path d="M30.4 372.6h6.2l2.8 2.8v8h-9z" fill="#e4eefa" stroke="#7f9dc4" stroke-width="0.9"/><path d="M36.6 372.6v2.8h2.8" fill="none" stroke="#7f9dc4" stroke-width="0.7"/><path d="M25.099999999999998 379.7h4.4l1.2-1.5h7v8.6h-12.6z" fill="#e9f0f9" stroke="#7d9abd" stroke-width="0.9"/><rect x="25.9" y="382.0" width="11" height="4.2" fill="url(#gFold)"/><path d="M24.999999999999996 386.9h12.8" stroke="#58779f" stroke-width="1"/><path d="M30.4 426.6h6.2l2.8 2.8v8h-9z" fill="#e4eefa" stroke="#7f9dc4" stroke-width="0.9"/><path d="M36.6 426.6v2.8h2.8" fill="none" stroke="#7f9dc4" stroke-width="0.7"/><path d="M25.099999999999998 433.7h4.4l1.2-1.5h7v8.6h-12.6z" fill="#e9f0f9" stroke="#7d9abd" stroke-width="0.9"/><rect x="25.9" y="436.0" width="11" height="4.2" fill="url(#gFold)"/><path d="M24.999999999999996 440.9h12.8" stroke="#58779f" stroke-width="1"/><path d="M44.7 391.7h10l3 2.8v10h-13z" fill="url(#gDoc)" stroke="#5b7ea8" stroke-width="0.9"/><path d="M57.800000000000004 394.59999999999997v10h-13" stroke="#3d5a86" stroke-width="1" fill="none"/><path d="M46.800000000000004 394.4h8.6" stroke="#5b9fe2" stroke-width="0.85"/><path d="M46.800000000000004 396.4h8.6" stroke="#5b9fe2" stroke-width="0.85"/><path d="M46.800000000000004 398.4h8.6" stroke="#5b9fe2" stroke-width="0.85"/><path d="M46.800000000000004 400.4h8.6" stroke="#5b9fe2" stroke-width="0.85"/><path d="M46.800000000000004 402.4h8.6" stroke="#5b9fe2" stroke-width="0.85"/><path d="M44.7 409.7h10l3 2.8v10h-13z" fill="url(#gDoc)" stroke="#5b7ea8" stroke-width="0.9"/><path d="M57.800000000000004 412.59999999999997v10h-13" stroke="#3d5a86" stroke-width="1" fill="none"/><path d="M46.800000000000004 412.4h8.6" stroke="#5b9fe2" stroke-width="0.85"/><path d="M46.800000000000004 414.4h8.6" stroke="#5b9fe2" stroke-width="0.85"/><path d="M46.800000000000004 416.4h8.6" stroke="#5b9fe2" stroke-width="0.85"/><path d="M46.800000000000004 418.4h8.6" stroke="#5b9fe2" stroke-width="0.85"/><path d="M46.800000000000004 420.4h8.6" stroke="#5b9fe2" stroke-width="0.85"/><path d="M25.4 444.6h7.8l3.2 3v11.6h-11z" fill="#fff" stroke="#666" stroke-width="0.8"/><path d="M27.2 447.4h5.5" stroke="#8a8a8a" stroke-width="0.8"/><path d="M27.2 449.59999999999997h5.5" stroke="#8a8a8a" stroke-width="0.8"/><path d="M27.2 451.79999999999995h4" stroke="#8a8a8a" stroke-width="0.8"/><path d="M27.2 454.0h4" stroke="#8a8a8a" stroke-width="0.8"/><path d="M27.2 456.2h4" stroke="#8a8a8a" stroke-width="0.8"/><path d="M35 449.6l4.9 9.6h-9.8z" fill="#ffd21c" stroke="#c79a00" stroke-width="0.7"/><path d="M35 453v3.4M35 457.2v0.9" stroke="#222" stroke-width="1.2"/><rect x="25.4" y="462.6" width="13.6" height="13.6" rx="0.8" fill="#9fb2b8" stroke="#70868c" stroke-width="0.8"/><rect x="30.4" y="463.6" width="7.4" height="7" fill="#fbfbfb"/><rect x="26.6" y="464" width="3" height="6" fill="#c2cfd3"/><rect x="26.4" y="471.4" width="11.6" height="3.6" fill="#7d949b"/><rect x="30" y="472.6" width="4.4" height="1.1" fill="#dfe7ea"/><path d="M26.4 476.2v1.4h2v-1.4M36 476.2v1.4h2v-1.4" fill="#70868c"/><path d="M43.8 487.7h4.4l1.2-1.5h7v8.6h-12.6z" fill="#e9f0f9" stroke="#7d9abd" stroke-width="0.9"/><rect x="44.599999999999994" y="490.0" width="11" height="4.2" fill="url(#gFold)"/><path d="M43.699999999999996 494.9h12.8" stroke="#58779f" stroke-width="1"/><path d="M43.8 505.7h4.4l1.2-1.5h7v8.6h-12.6z" fill="#e9f0f9" stroke="#7d9abd" stroke-width="0.9"/><rect x="44.599999999999994" y="508.0" width="11" height="4.2" fill="url(#gFold)"/><path d="M43.699999999999996 512.9h12.8" stroke="#58779f" stroke-width="1"/><path d="M43.8 523.7h4.4l1.2-1.5h7v8.6h-12.6z" fill="#e9f0f9" stroke="#7d9abd" stroke-width="0.9"/><rect x="44.599999999999994" y="526.0" width="11" height="4.2" fill="url(#gFold)"/><path d="M43.699999999999996 530.9000000000001h12.8" stroke="#58779f" stroke-width="1"/><path d="M43.8 541.7h4.4l1.2-1.5h7v8.6h-12.6z" fill="#e9f0f9" stroke="#7d9abd" stroke-width="0.9"/><rect x="44.599999999999994" y="544.0" width="11" height="4.2" fill="url(#gFold)"/><path d="M43.699999999999996 548.9000000000001h12.8" stroke="#58779f" stroke-width="1"/><rect x="49" y="480.4" width="9.6" height="8.4" fill="#1a3fb4" stroke="#33499c" stroke-width="0.8"/><path d="M51.40 480.4V488.79999999999995" stroke="#ffffff" stroke-width="1.1"/><path d="M53.80 480.4V488.79999999999995" stroke="#ffffff" stroke-width="1.1"/><path d="M56.20 480.4V488.79999999999995" stroke="#ffffff" stroke-width="1.1"/><path d="M49 483.20H58.6" stroke="#ffffff" stroke-width="1.1"/><path d="M49 486.00H58.6" stroke="#ffffff" stroke-width="1.1"/><rect x="49.4" y="498.2" width="9.2" height="8.8" rx="0.8" fill="#c9181c" stroke="#8e0c10" stroke-width="0.6"/><path d="M51.199999999999996 500.4h4.699999999999999M51.199999999999996 502.4h4.699999999999999" stroke="#fff" stroke-width="1"/><path d="M52.62 504.536q1.1039999999999999 -1.7600000000000002 2.3 0t2.3 0" stroke="#fff" stroke-width="1" fill="none"/><path d="M52.16 505.4h4.6" stroke="#fff" stroke-width="0.9"/><rect x="51.6" y="516.2" width="3.2" height="1.6" fill="#b9b9b9"/><rect x="50" y="517.6" width="6.6" height="7.6" rx="1" fill="url(#gOr)" stroke="#b96c00" stroke-width="0.5"/><circle cx="53.6" cy="538.8" r="4.4" fill="#d9dbe0"/><path d="M53.6 534.4l1.3 3 3.2 0.3-2.4 2.1 0.8 3.2-2.9-1.7-2.9 1.7 0.8-3.2-2.4-2.1 3.2-0.3z" fill="#e9ebef" stroke="#b9bcc4" stroke-width="0.4"/><circle cx="55.4" cy="538.6" r="2" fill="#f5cf30"/></svg>
<svg class="a" style="left:0px;top:0px;" width="1100" height="200" viewBox="0 0 1100 200"><path d="M265.9 171.9l4.4 4.4" stroke="#4a4a4a" stroke-width="2.1" stroke-linecap="round"/><circle cx="261.5" cy="167.5" r="6" fill="url(#gZ)" stroke="#8c9ab2" stroke-width="1.3"/><path d="M258.5 167.5h6M261.5 164.5v6" stroke="#2b3f9c" stroke-width="1.3"/><path d="M292.09999999999997 171.9l4.4 4.4" stroke="#4a4a4a" stroke-width="2.1" stroke-linecap="round"/><circle cx="287.7" cy="167.5" r="6" fill="url(#gZ)" stroke="#8c9ab2" stroke-width="1.3"/><path d="M284.7 167.5h6" stroke="#2b3f9c" stroke-width="1.3"/><path d="M325.0 171.9l4.4 4.4" stroke="#4a4a4a" stroke-width="2.1" stroke-linecap="round"/><circle cx="320.6" cy="167.5" r="6" fill="url(#gZ)" stroke="#8c9ab2" stroke-width="1.3"/><path d="M318.20000000000005 164.5h3.2l1.6 1.6v4.4h-4.8z" fill="#e4ecfb" stroke="#2b3f9c" stroke-width="1"/><path d="M351.09999999999997 171.9l4.4 4.4" stroke="#4a4a4a" stroke-width="2.1" stroke-linecap="round"/><circle cx="346.7" cy="167.5" r="6" fill="url(#gZ)" stroke="#8c9ab2" stroke-width="1.3"/><rect x="344.5" y="165.3" width="4.4" height="4.4" fill="none" stroke="#2b3f9c" stroke-width="1.2"/><path d="M343.09999999999997 169.7h1.6M348.9 163.7v1.6" stroke="#2b3f9c" stroke-width="1.2"/><path d="M377.4 171.9l4.4 4.4" stroke="#4a4a4a" stroke-width="2.1" stroke-linecap="round"/><circle cx="373.0" cy="167.5" r="6" fill="url(#gZ)" stroke="#8c9ab2" stroke-width="1.3"/><path d="M370.4 163.5h5l-5 7.6z" fill="#2b3f9c"/><path d="M375.6 163.1q3.6-1.4 4.4 1.6" stroke="#5a6fc0" stroke-width="1" fill="none"/><path d="M403.29999999999995 171.9l4.4 4.4" stroke="#4a4a4a" stroke-width="2.1" stroke-linecap="round"/><circle cx="398.9" cy="167.5" r="6" fill="url(#gZ)" stroke="#8c9ab2" stroke-width="1.3"/><path d="M394.9 167.5h8M398.9 163.5v8" stroke="#2b3f9c" stroke-width="1.1"/><path d="M394.5 167.5l1.8-1.6v3.2zM403.29999999999995 167.5l-1.8-1.6v3.2zM398.9 163.1l-1.6 1.8h3.2zM398.9 171.9l-1.6-1.8h3.2z" fill="#2b3f9c"/><path d="M977 169.2L984.20 169.20" stroke="#f2c22e" stroke-width="1.2"/><path d="M977 169.2L983.65 171.96" stroke="#f2c22e" stroke-width="1.2"/><path d="M977 169.2L982.09 174.29" stroke="#f2c22e" stroke-width="1.2"/><path d="M977 169.2L979.76 175.85" stroke="#f2c22e" stroke-width="1.2"/><path d="M977 169.2L977.00 176.40" stroke="#f2c22e" stroke-width="1.2"/><path d="M977 169.2L974.24 175.85" stroke="#f2c22e" stroke-width="1.2"/><path d="M977 169.2L971.91 174.29" stroke="#f2c22e" stroke-width="1.2"/><path d="M977 169.2L970.35 171.96" stroke="#f2c22e" stroke-width="1.2"/><path d="M977 169.2L969.80 169.20" stroke="#f2c22e" stroke-width="1.2"/><path d="M977 169.2L970.35 166.44" stroke="#f2c22e" stroke-width="1.2"/><path d="M977 169.2L971.91 164.11" stroke="#f2c22e" stroke-width="1.2"/><path d="M977 169.2L974.24 162.55" stroke="#f2c22e" stroke-width="1.2"/><path d="M977 169.2L977.00 162.00" stroke="#f2c22e" stroke-width="1.2"/><path d="M977 169.2L979.76 162.55" stroke="#f2c22e" stroke-width="1.2"/><path d="M977 169.2L982.09 164.11" stroke="#f2c22e" stroke-width="1.2"/><path d="M977 169.2L983.65 166.44" stroke="#f2c22e" stroke-width="1.2"/><circle cx="977" cy="169.2" r="4.6" fill="#f8cc3a"/><path d="M980.4 166.8l4 3.8-4 3.8z" fill="#222"/><path d="M1002.8 171.6a7 6.8 0 0 1 13.6-2.8z" fill="#f3cf5a" stroke="#d9ac30" stroke-width="0.5"/><path d="M1001.6 174.2l14.6-6.6 2.8 3.6-14.2 7z" fill="#2a55c8" stroke="#e8efff" stroke-width="0.5"/><path d="M1002.8 175.6l14.8-6.8M1006.4 172l2.4 3.8M1011.4 169.8l2.4 3.8" stroke="#e8f0ff" stroke-width="0.9"/><rect x="1028.4" y="162.8" width="15.4" height="12" fill="#fff" stroke="#5670a4" stroke-width="1"/><rect x="1028.4" y="162.8" width="15.4" height="1.8" fill="#7f98c8"/><path d="M1036 165v9.6" stroke="#5670a4" stroke-width="0.9"/><path d="M1031 170l4-3.4v2.2h1v2.4h-1v2.2z" fill="#3fae3a"/><path d="M1038 167.4h4M1038 169.6h4M1038 171.8h4" stroke="#5670a4" stroke-width="0.9"/></svg>
<div class="a" style="left:411px;top:48px;width:542px;height:629px;background:#fbfbfb;border:1px solid #1b75bb;"></div>
<div class="t" style="top:54px;line-height:20px;font-size:13px;color:#333;left:418.7px;letter-spacing:0.082px;">Análisis de rendimientos</div>
<div class="a" style="left:418px;top:78px;width:528px;height:592px;background:#fff;border:1px solid #d5d5d5;"></div>
<div class="a" style="left:419px;top:106px;width:528px;height:1px;background:#dcdcdc"></div>
<div class="t" style="top:85px;line-height:20px;font-size:17px;color:#1c6fb8;left:762.0px;letter-spacing:-0.120px;">Análisis de rendimientos</div>
<div class="t" style="top:114px;line-height:20px;font-size:11px;color:#10589c;font-weight:700;left:801.0px;letter-spacing:0.361px;">Análisis de rendimientos</div>
<div class="a" style="left:427px;top:131px;width:512px;height:1px;background:#3a86bd"></div>
<div class="a" style="left:435px;top:139px;width:492px;height:416px;background:#fff;border:1px solid #a8a8a8;"></div>
<div class="t" style="top:147px;line-height:20px;font-size:11px;color:#b3b3b3;left:440.5px;letter-spacing:-0.139px;">Arrastre una columna aquí para agrupar por dicha columna</div>
<div class="a" style="left:436px;top:172px;width:492px;height:1px;background:#a8a8a8"></div>
<div class="a" style="left:436px;top:192px;width:492px;height:1px;background:#a8a8a8"></div>
<div class="a" style="left:536px;top:173px;width:1px;height:19px;background:#a8a8a8"></div>
<div class="a" style="left:637px;top:173px;width:1px;height:19px;background:#a8a8a8"></div>
<div class="a" style="left:797px;top:173px;width:1px;height:19px;background:#a8a8a8"></div>
<div class="a" style="left:911px;top:173px;width:1px;height:19px;background:#a8a8a8"></div>
<div class="t" style="top:172px;line-height:20px;font-size:11px;color:#222;left:469.5px;letter-spacing:-0.125px;">Acimut</div>
<div class="t" style="top:172px;line-height:20px;font-size:11px;color:#222;left:579.0px;letter-spacing:0.245px;">Tilt</div>
<div class="t" style="top:172px;line-height:20px;font-size:11px;color:#222;left:677.0px;letter-spacing:-0.021px;">Irradiación anual</div>
<div class="t" style="top:172px;line-height:20px;font-size:11px;color:#222;left:818.0px;letter-spacing:-0.227px;">Rendimiento</div>
<svg class="a" style="left:897.6px;top:180px;" width="10" height="6" viewBox="0 0 10 6"><path d="M0.5 0.8h8.6l-4.3 4.6z" fill="#777"/></svg>
<div class="a" style="left:436px;top:193px;width:475px;height:18px;background:#cfe5f7;"></div>
<div class="a" style="left:436px;top:211px;width:475px;height:1px;background:#d9d9d9"></div>
<div class="a" style="left:436px;top:230px;width:475px;height:1px;background:#d9d9d9"></div>
<div class="a" style="left:436px;top:249px;width:475px;height:1px;background:#d9d9d9"></div>
<div class="a" style="left:436px;top:268px;width:475px;height:1px;background:#d9d9d9"></div>
<div class="a" style="left:436px;top:287px;width:475px;height:1px;background:#d9d9d9"></div>
<div class="a" style="left:436px;top:306px;width:475px;height:1px;background:#d9d9d9"></div>
<div class="a" style="left:436px;top:325px;width:475px;height:1px;background:#d9d9d9"></div>
<div class="a" style="left:436px;top:344px;width:475px;height:1px;background:#d9d9d9"></div>
<div class="a" style="left:436px;top:363px;width:475px;height:1px;background:#d9d9d9"></div>
<div class="a" style="left:436px;top:382px;width:475px;height:1px;background:#d9d9d9"></div>
<div class="a" style="left:436px;top:401px;width:475px;height:1px;background:#d9d9d9"></div>
<div class="a" style="left:436px;top:420px;width:475px;height:1px;background:#d9d9d9"></div>
<div class="a" style="left:436px;top:439px;width:475px;height:1px;background:#d9d9d9"></div>
<div class="a" style="left:436px;top:458px;width:475px;height:1px;background:#d9d9d9"></div>
<div class="a" style="left:436px;top:477px;width:475px;height:1px;background:#d9d9d9"></div>
<div class="a" style="left:436px;top:496px;width:475px;height:1px;background:#d9d9d9"></div>
<div class="a" style="left:436px;top:515px;width:475px;height:1px;background:#d9d9d9"></div>
<div class="a" style="left:436px;top:534px;width:475px;height:1px;background:#d9d9d9"></div>
<div class="a" style="left:436px;top:553px;width:475px;height:1px;background:#d9d9d9"></div>
<div class="a" style="left:536px;top:193px;width:1px;height:363px;background:#d9d9d9"></div>
<div class="a" style="left:637px;top:193px;width:1px;height:363px;background:#d9d9d9"></div>
<div class="a" style="left:797px;top:193px;width:1px;height:363px;background:#d9d9d9"></div>
<div class="a" style="left:436px;top:193px;width:473px;height:16px;border:1px dotted #222;"></div>
<div class="t" style="top:192px;line-height:20px;font-size:11px;color:#222;left:479.9px;">13</div>
<div class="t" style="top:192px;line-height:20px;font-size:11px;color:#222;left:583.9px;">7</div>
<div class="t" style="top:192px;line-height:20px;font-size:11px;color:#222;left:752.8px;word-spacing:-0.6px;letter-spacing:-0.15px;">1 873.60</div>
<div class="t" style="top:192px;line-height:20px;font-size:11px;color:#222;left:838.3px;">100.00</div>
<div class="t" style="top:211px;line-height:20px;font-size:11px;color:#222;left:479.9px;">12</div>
<div class="t" style="top:211px;line-height:20px;font-size:11px;color:#222;left:583.9px;">7</div>
<div class="t" style="top:211px;line-height:20px;font-size:11px;color:#222;left:752.8px;word-spacing:-0.6px;letter-spacing:-0.15px;">1 873.60</div>
<div class="t" style="top:211px;line-height:20px;font-size:11px;color:#222;left:838.3px;">100.00</div>
<div class="t" style="top:230px;line-height:20px;font-size:11px;color:#222;left:480.3px;">11</div>
<div class="t" style="top:230px;line-height:20px;font-size:11px;color:#222;left:583.9px;">7</div>
<div class="t" style="top:230px;line-height:20px;font-size:11px;color:#222;left:752.8px;word-spacing:-0.6px;letter-spacing:-0.15px;">1 873.60</div>
<div class="t" style="top:230px;line-height:20px;font-size:11px;color:#222;left:838.3px;">100.00</div>
<div class="t" style="top:249px;line-height:20px;font-size:11px;color:#222;left:479.9px;">10</div>
<div class="t" style="top:249px;line-height:20px;font-size:11px;color:#222;left:583.9px;">7</div>
<div class="t" style="top:249px;line-height:20px;font-size:11px;color:#222;left:752.8px;word-spacing:-0.6px;letter-spacing:-0.15px;">1 873.60</div>
<div class="t" style="top:249px;line-height:20px;font-size:11px;color:#222;left:838.3px;">100.00</div>
<div class="t" style="top:268px;line-height:20px;font-size:11px;color:#222;left:482.9px;">9</div>
<div class="t" style="top:268px;line-height:20px;font-size:11px;color:#222;left:583.9px;">7</div>
<div class="t" style="top:268px;line-height:20px;font-size:11px;color:#222;left:752.8px;word-spacing:-0.6px;letter-spacing:-0.15px;">1 873.60</div>
<div class="t" style="top:268px;line-height:20px;font-size:11px;color:#222;left:838.3px;">100.00</div>
<div class="t" style="top:287px;line-height:20px;font-size:11px;color:#222;left:482.9px;">8</div>
<div class="t" style="top:287px;line-height:20px;font-size:11px;color:#222;left:583.9px;">7</div>
<div class="t" style="top:287px;line-height:20px;font-size:11px;color:#222;left:752.8px;word-spacing:-0.6px;letter-spacing:-0.15px;">1 873.60</div>
<div class="t" style="top:287px;line-height:20px;font-size:11px;color:#222;left:838.3px;">100.00</div>
<div class="t" style="top:306px;line-height:20px;font-size:11px;color:#222;left:482.9px;">7</div>
<div class="t" style="top:306px;line-height:20px;font-size:11px;color:#222;left:583.9px;">7</div>
<div class="t" style="top:306px;line-height:20px;font-size:11px;color:#222;left:752.8px;word-spacing:-0.6px;letter-spacing:-0.15px;">1 873.60</div>
<div class="t" style="top:306px;line-height:20px;font-size:11px;color:#222;left:838.3px;">100.00</div>
<div class="t" style="top:325px;line-height:20px;font-size:11px;color:#222;left:482.9px;">6</div>
<div class="t" style="top:325px;line-height:20px;font-size:11px;color:#222;left:583.9px;">7</div>
<div class="t" style="top:325px;line-height:20px;font-size:11px;color:#222;left:752.8px;word-spacing:-0.6px;letter-spacing:-0.15px;">1 873.60</div>
<div class="t" style="top:325px;line-height:20px;font-size:11px;color:#222;left:838.3px;">100.00</div>
<div class="t" style="top:344px;line-height:20px;font-size:11px;color:#222;left:482.9px;">5</div>
<div class="t" style="top:344px;line-height:20px;font-size:11px;color:#222;left:583.9px;">7</div>
<div class="t" style="top:344px;line-height:20px;font-size:11px;color:#222;left:752.8px;word-spacing:-0.6px;letter-spacing:-0.15px;">1 873.60</div>
<div class="t" style="top:344px;line-height:20px;font-size:11px;color:#222;left:838.3px;">100.00</div>
<div class="t" style="top:363px;line-height:20px;font-size:11px;color:#222;left:481.1px;">-5</div>
<div class="t" style="top:363px;line-height:20px;font-size:11px;color:#222;left:583.9px;">7</div>
<div class="t" style="top:363px;line-height:20px;font-size:11px;color:#222;left:752.8px;word-spacing:-0.6px;letter-spacing:-0.15px;">1 873.60</div>
<div class="t" style="top:363px;line-height:20px;font-size:11px;color:#222;left:838.3px;">100.00</div>
<div class="t" style="top:382px;line-height:20px;font-size:11px;color:#222;left:481.1px;">-6</div>
<div class="t" style="top:382px;line-height:20px;font-size:11px;color:#222;left:583.9px;">7</div>
<div class="t" style="top:382px;line-height:20px;font-size:11px;color:#222;left:752.8px;word-spacing:-0.6px;letter-spacing:-0.15px;">1 873.60</div>
<div class="t" style="top:382px;line-height:20px;font-size:11px;color:#222;left:838.3px;">100.00</div>
<div class="t" style="top:401px;line-height:20px;font-size:11px;color:#222;left:481.1px;">-7</div>
<div class="t" style="top:401px;line-height:20px;font-size:11px;color:#222;left:583.9px;">7</div>
<div class="t" style="top:401px;line-height:20px;font-size:11px;color:#222;left:752.8px;word-spacing:-0.6px;letter-spacing:-0.15px;">1 873.60</div>
<div class="t" style="top:401px;line-height:20px;font-size:11px;color:#222;left:838.3px;">100.00</div>
<div class="t" style="top:420px;line-height:20px;font-size:11px;color:#222;left:481.1px;">-8</div>
<div class="t" style="top:420px;line-height:20px;font-size:11px;color:#222;left:583.9px;">7</div>
<div class="t" style="top:420px;line-height:20px;font-size:11px;color:#222;left:752.8px;word-spacing:-0.6px;letter-spacing:-0.15px;">1 873.60</div>
<div class="t" style="top:420px;line-height:20px;font-size:11px;color:#222;left:838.3px;">100.00</div>
<div class="t" style="top:439px;line-height:20px;font-size:11px;color:#222;left:481.1px;">-9</div>
<div class="t" style="top:439px;line-height:20px;font-size:11px;color:#222;left:583.9px;">7</div>
<div class="t" style="top:439px;line-height:20px;font-size:11px;color:#222;left:752.8px;word-spacing:-0.6px;letter-spacing:-0.15px;">1 873.60</div>
<div class="t" style="top:439px;line-height:20px;font-size:11px;color:#222;left:838.3px;">100.00</div>
<div class="t" style="top:458px;line-height:20px;font-size:11px;color:#222;left:478.0px;">-10</div>
<div class="t" style="top:458px;line-height:20px;font-size:11px;color:#222;left:583.9px;">7</div>
<div class="t" style="top:458px;line-height:20px;font-size:11px;color:#222;left:752.8px;word-spacing:-0.6px;letter-spacing:-0.15px;">1 873.60</div>
<div class="t" style="top:458px;line-height:20px;font-size:11px;color:#222;left:838.3px;">100.00</div>
<div class="t" style="top:477px;line-height:20px;font-size:11px;color:#222;left:478.5px;">-11</div>
<div class="t" style="top:477px;line-height:20px;font-size:11px;color:#222;left:583.9px;">7</div>
<div class="t" style="top:477px;line-height:20px;font-size:11px;color:#222;left:752.8px;word-spacing:-0.6px;letter-spacing:-0.15px;">1 873.60</div>
<div class="t" style="top:477px;line-height:20px;font-size:11px;color:#222;left:838.3px;">100.00</div>
<div class="t" style="top:496px;line-height:20px;font-size:11px;color:#222;left:478.0px;">-12</div>
<div class="t" style="top:496px;line-height:20px;font-size:11px;color:#222;left:583.9px;">7</div>
<div class="t" style="top:496px;line-height:20px;font-size:11px;color:#222;left:752.8px;word-spacing:-0.6px;letter-spacing:-0.15px;">1 873.60</div>
<div class="t" style="top:496px;line-height:20px;font-size:11px;color:#222;left:838.3px;">100.00</div>
<div class="t" style="top:515px;line-height:20px;font-size:11px;color:#222;left:478.0px;">-13</div>
<div class="t" style="top:515px;line-height:20px;font-size:11px;color:#222;left:583.9px;">7</div>
<div class="t" style="top:515px;line-height:20px;font-size:11px;color:#222;left:752.8px;word-spacing:-0.6px;letter-spacing:-0.15px;">1 873.60</div>
<div class="t" style="top:515px;line-height:20px;font-size:11px;color:#222;left:838.3px;">100.00</div>
<div class="t" style="top:534px;line-height:20px;font-size:11px;color:#222;left:479.9px;">12</div>
<div class="t" style="top:534px;line-height:20px;font-size:11px;color:#222;left:583.9px;">6</div>
<div class="t" style="top:534px;line-height:20px;font-size:11px;color:#222;left:752.8px;word-spacing:-0.6px;letter-spacing:-0.15px;">1 873.64</div>
<div class="t" style="top:534px;line-height:20px;font-size:11px;color:#222;left:838.3px;">100.00</div>
<div class="a" style="left:911px;top:193px;width:17px;height:363px;background:#f0f0f0;"></div>
<div class="a" style="left:911px;top:211px;width:17px;height:16px;background:#cdcdcd;"></div>
<svg class="a" style="left:914px;top:197px;" width="11" height="8" viewBox="0 0 11 8"><path d="M2 6.2l3.5-3.6 3.5 3.6" stroke="#777" stroke-width="1.8" fill="none"/></svg>
<svg class="a" style="left:914px;top:544px;" width="11" height="8" viewBox="0 0 11 8"><path d="M2 1.8l3.5 3.6 3.5-3.6" stroke="#777" stroke-width="1.8" fill="none"/></svg>
<div class="t" style="top:568px;line-height:20px;font-size:11px;color:#555;left:435.8px;letter-spacing:-0.108px;">Irradiación diaria media mensual [kWh/m²]</div>
<div class="a" style="left:436px;top:587px;width:491px;height:37px;background:#f4f4f4;border:1px solid #a8a8a8;"></div>
<div class="a" style="left:437px;top:588px;width:491px;height:18px;background:#b4c8e6;"></div>
<div class="a" style="left:437px;top:606px;width:491px;height:1px;background:#a8a8a8"></div>
<div class="a" style="left:477px;top:588px;width:1px;height:37px;background:#a8a8a8"></div>
<div class="a" style="left:518px;top:588px;width:1px;height:37px;background:#a8a8a8"></div>
<div class="a" style="left:559px;top:588px;width:1px;height:37px;background:#a8a8a8"></div>
<div class="a" style="left:600px;top:588px;width:1px;height:37px;background:#a8a8a8"></div>
<div class="a" style="left:641px;top:588px;width:1px;height:37px;background:#a8a8a8"></div>
<div class="a" style="left:682px;top:588px;width:1px;height:37px;background:#a8a8a8"></div>
<div class="a" style="left:723px;top:588px;width:1px;height:37px;background:#a8a8a8"></div>
<div class="a" style="left:764px;top:588px;width:1px;height:37px;background:#a8a8a8"></div>
<div class="a" style="left:805px;top:588px;width:1px;height:37px;background:#a8a8a8"></div>
<div class="a" style="left:846px;top:588px;width:1px;height:37px;background:#a8a8a8"></div>
<div class="a" style="left:887px;top:588px;width:1px;height:37px;background:#a8a8a8"></div>
<div class="t" style="top:587px;line-height:20px;font-size:11px;color:#15158c;left:447.2px;">Ene</div>
<div class="t" style="top:606px;line-height:20px;font-size:11px;color:#333;left:451.7px;">5.34</div>
<div class="t" style="top:587px;line-height:20px;font-size:11px;color:#15158c;left:488.5px;">Feb</div>
<div class="t" style="top:606px;line-height:20px;font-size:11px;color:#333;left:492.7px;">5.57</div>
<div class="t" style="top:587px;line-height:20px;font-size:11px;color:#15158c;left:529.5px;">Mar</div>
<div class="t" style="top:606px;line-height:20px;font-size:11px;color:#333;left:533.7px;">5.18</div>
<div class="t" style="top:587px;line-height:20px;font-size:11px;color:#15158c;left:571.4px;">Abr</div>
<div class="t" style="top:606px;line-height:20px;font-size:11px;color:#333;left:574.7px;">5.03</div>
<div class="t" style="top:587px;line-height:20px;font-size:11px;color:#15158c;left:610.6px;">May</div>
<div class="t" style="top:606px;line-height:20px;font-size:11px;color:#333;left:615.7px;">4.74</div>
<div class="t" style="top:587px;line-height:20px;font-size:11px;color:#15158c;left:653.1px;">Jun</div>
<div class="t" style="top:606px;line-height:20px;font-size:11px;color:#333;left:656.7px;">5.04</div>
<div class="t" style="top:587px;line-height:20px;font-size:11px;color:#15158c;left:696.0px;">Jul</div>
<div class="t" style="top:606px;line-height:20px;font-size:11px;color:#333;left:697.7px;">5.19</div>
<div class="t" style="top:587px;line-height:20px;font-size:11px;color:#15158c;left:734.2px;">Ago</div>
<div class="t" style="top:606px;line-height:20px;font-size:11px;color:#333;left:738.7px;">5.30</div>
<div class="t" style="top:587px;line-height:20px;font-size:11px;color:#15158c;left:776.7px;">Set</div>
<div class="t" style="top:606px;line-height:20px;font-size:11px;color:#333;left:779.7px;">5.30</div>
<div class="t" style="top:587px;line-height:20px;font-size:11px;color:#15158c;left:817.4px;">Oct</div>
<div class="t" style="top:606px;line-height:20px;font-size:11px;color:#333;left:820.7px;">5.09</div>
<div class="t" style="top:587px;line-height:20px;font-size:11px;color:#15158c;left:857.2px;">Nov</div>
<div class="t" style="top:606px;line-height:20px;font-size:11px;color:#333;left:861.7px;">4.85</div>
<div class="t" style="top:587px;line-height:20px;font-size:11px;color:#15158c;left:900.1px;">Dic</div>
<div class="t" style="top:606px;line-height:20px;font-size:11px;color:#333;left:902.7px;">5.00</div>
<div class="a" style="left:623px;top:643px;width:118px;height:18px;background:#e6e6e6;border:1px solid #a6a6a6;background:linear-gradient(#f3f3f3,#e2e2e2);"></div>
<div class="t" style="top:643px;line-height:20px;font-size:11px;color:#222;left:666.0px;letter-spacing:0.166px;">Cerrar</div>
<div class="a" style="left:0px;top:728px;width:1366px;height:40px;background:#0c1a22;"></div>
<div class="a" style="left:392px;top:728px;width:44px;height:40px;background:#3b464b;"></div>
<div class="a" style="left:436px;top:728px;width:4px;height:40px;background:#2a363b;"></div>
<div class="a" style="left:1361px;top:728px;width:1px;height:40px;background:#56606a"></div>
<div class="a" style="left:151px;top:766px;width:40px;height:2px;background:#76b9ed;"></div>
<div class="a" style="left:200px;top:766px;width:40px;height:2px;background:#76b9ed;"></div>
<div class="a" style="left:298px;top:766px;width:40px;height:2px;background:#76b9ed;"></div>
<div class="a" style="left:347px;top:766px;width:40px;height:2px;background:#76b9ed;"></div>
<div class="a" style="left:392px;top:766px;width:47px;height:2px;background:#76b9ed;"></div>
<div class="t" style="top:738px;line-height:20px;font-size:12px;color:#fff;left:1214.9px;transform:scaleX(0.7828);transform-origin:0 50%;">ESP</div>
<div class="t" style="top:729px;line-height:20px;font-size:12px;color:#fff;left:1249.5px;letter-spacing:-0.305px;">10:16 p. m.</div>
<div class="t" style="top:747px;line-height:20px;font-size:12px;color:#fff;left:1249.5px;letter-spacing:-0.274px;">15/10/2018</div>
<svg class="a" style="left:0px;top:0px;" width="460" height="768" viewBox="0 0 460 768"><path d="M15.8 741.6l6.6-0.9v6.5h-6.6zM23.2 740.6l9.2-1.3v7.9h-9.2zM15.8 748h6.6v6.5l-6.6-0.9zM23.2 748h9.2v7.9l-9.2-1.3z" fill="#fff"/><circle cx="74.7" cy="745.7" r="5" fill="none" stroke="#fff" stroke-width="1.5"/><path d="M71.2 749.4l-6.8 6.6" stroke="#fff" stroke-width="1.6"/><g fill="none" stroke="#fff" stroke-width="1.3"><rect x="113.6" y="744.2" width="9" height="6.6"/><path d="M112.6 742.6v-2.4h11v2.4M112.6 752.4v2.4h11v-2.4"/></g><path d="M126.2 740v2.4M126.2 744.4v6.4M126.2 752.6v2.4" stroke="#fff" stroke-width="1.6"/><circle cx="170.8" cy="747.8" r="11.3" fill="#db4437"/><path d="M170.8 747.8L161.01 753.45A11.3 11.3 0 0 0 180.59 753.45 L170.8 747.8z" fill="#0f9d58"/><path d="M170.8 747.8L180.59 753.45A11.3 11.3 0 0 0 170.80 736.50z" fill="#ffcd40"/><path d="M170.8 747.8L161.01 742.15A11.3 11.3 0 0 1 180.59 742.15z" fill="#db4437"/><path d="M170.8 747.8L180.59 742.15A11.3 11.3 0 0 1 170.80 759.10z" fill="#ffcd40"/><path d="M170.8 747.8L170.80 759.10A11.3 11.3 0 0 1 161.01 742.15z" fill="#0f9d58"/><path d="M170.8 742.5999999999999h9.8" stroke="#db4437" stroke-width="0.1"/><circle cx="170.8" cy="747.8" r="5.3" fill="#fff"/><circle cx="170.8" cy="747.8" r="4.2" fill="#4285f4"/><path d="M209.4 740.2h8l1.6 1.6h11.8v14.6h-21.4z" fill="#f4c84a"/><path d="M209.4 743h21.4v13.6h-21.4z" fill="#fbe08a"/><path d="M214 756.6v-6.6h12v6.6h-3v-3.6h-6v3.6z" fill="#3a9bdc"/><path d="M209.4 755.2h21.4v1.4h-21.4z" fill="#e6b93c" opacity=".6"/><path d="M264 742.6v-1.6a4.7 4.7 0 0 1 9.4 0v1.6" fill="none" stroke="#fff" stroke-width="1.3"/><path d="M257 742.6h23v14.4a1.6 1.6 0 0 1-1.6 1.6h-19.8a1.6 1.6 0 0 1-1.6-1.6z" fill="#fff"/><rect x="263" y="745" width="5.2" height="5.2" fill="#f25022"/><rect x="269" y="745" width="5.2" height="5.2" fill="#7fba00"/><rect x="263" y="751" width="5.2" height="5.2" fill="#00a4ef"/><rect x="269" y="751" width="5.2" height="5.2" fill="#ffb900"/><path d="M305.8 744l12.2-6.2 12.2 6.2v13h-24.4z" fill="#fff"/><path d="M308.4 744.4h19.4l-7.4 4.8 5 4.2-7.2-2.4z" fill="#0c1a22"/><rect x="366" y="739.6" width="12.2" height="16.6" fill="#fff"/><path d="M369.6 742.0h7.4" stroke="#2b579a" stroke-width="1"/><path d="M369.6 744.2h7.4" stroke="#2b579a" stroke-width="1"/><path d="M369.6 746.4h7.4" stroke="#2b579a" stroke-width="1"/><path d="M369.6 748.6h7.4" stroke="#2b579a" stroke-width="1"/><path d="M369.6 750.8h7.4" stroke="#2b579a" stroke-width="1"/><path d="M369.6 753.0h7.4" stroke="#2b579a" stroke-width="1"/><path d="M355.6 739.4l13.4-2.6v22l-13.4-2.6z" fill="#2b579a"/></svg>
<div class="t" style="top:739px;line-height:20px;font-size:10px;color:#fff;font-weight:700;left:356.7px;letter-spacing:0.000px;">W</div>
<svg class="a" style="left:404px;top:735px;" width="24" height="24" viewBox="0 0 24 24"><rect x="0.2" y="0.8" width="23.2" height="19" fill="url(#gYel)"/><path d="M0.2 19.8q11.6 3.6 23.2 0z" fill="#e8c030"/>
      <path d="M0.8 19.6q10 2.4 17.4-0.8" stroke="#2a2a10" stroke-width="1.1" fill="none" opacity=".8"/></svg>
<div class="t" style="top:736px;line-height:20px;font-size:20px;color:#2aa3d6;font-weight:700;left:408.7px;-webkit-text-stroke:1.1px #1c86b8;">S</div>
<div class="t" style="top:744px;line-height:20px;font-size:6px;color:#000;font-weight:700;left:420.9px;letter-spacing:-0.800px;">PV</div>
<svg class="a" style="left:1040px;top:728px;" width="326" height="40" viewBox="1040 728 326 40"><g fill="none" stroke="#fff" stroke-width="1.2"><circle cx="1066.6" cy="742.6" r="2.5"/><path d="M1063.6 749.4a3.4 3.6 0 0 1 6.6 0"/><circle cx="1059.8" cy="749" r="2.5"/><path d="M1056 755.4a4 4 0 0 1 7.8 0"/></g><path d="M1093.4 751l5.7-6 5.7 6" fill="none" stroke="#fff" stroke-width="1.3"/><path d="M1117.6 751.4a2.9 2.9 0 0 1 0.4-5.8 4.4 4.4 0 0 1 8.2-1.2 3.4 3.4 0 0 1 2.6 6.6 M1128 751.4h-10.4z" fill="#fff"/><path d="M1121.4 749.8a2.3 2.3 0 0 1 0.3-4.6 3.5 3.5 0 0 1 6.5-0.9" fill="none" stroke="#0c1a22" stroke-width="0.7" opacity=".5"/><circle cx="1126.7" cy="751.6" r="4.4" fill="#2f66dc" stroke="#0c1a22" stroke-width="0.5"/><path d="M1124.2 751a2.6 2.6 0 0 1 4.6-1.2M1129.2 752.2a2.6 2.6 0 0 1-4.6 1.2" stroke="#fff" stroke-width="1" fill="none"/><rect x="1140.6" y="744.7" width="13" height="8" fill="none" stroke="#fff" stroke-width="1.3"/><rect x="1154.2" y="747" width="1.4" height="3.4" fill="#fff"/><rect x="1142.4" y="746.6" width="2.6" height="4.2" fill="#fff"/><path d="M1172.4 753.8A4.2 4.2 0 0 1 1176.6 749.6" fill="none" stroke="#fff" stroke-width="1.2" opacity=".9"/><path d="M1169.4 753.8A7.2 7.2 0 0 1 1176.6 746.6" fill="none" stroke="#fff" stroke-width="1.2" opacity=".9"/><path d="M1166.4 753.8A10.2 10.2 0 0 1 1176.6 743.6" fill="none" stroke="#fff" stroke-width="1.2" opacity=".9"/><circle cx="1176.0" cy="753.1999999999999" r="1.3" fill="#fff"/><path d="M1187.2 746.2h2.6l3.2-3.4v10.8l-3.2-3.4h-2.6z" fill="none" stroke="#fff" stroke-width="1.1"/><path d="M1196.6 746l4.2 4.6M1200.8 746l-4.2 4.6" stroke="#fff" stroke-width="1.2"/><path d="M1325 740h16v13h-8.4l-3.6 3.8v-3.8h-4z" fill="#fff"/><path d="M1328 743.2h10.6M1328 745.6h10.6M1328 748h7" stroke="#0c1a22" stroke-width="0.9"/><circle cx="1340.5" cy="755.6" r="8" fill="#2b2f33" stroke="#6a6e72" stroke-width="1"/></svg>
<div class="t" style="top:746px;line-height:20px;font-size:12px;color:#fff;font-weight:700;left:1337.2px;">2</div>
</body></html>
